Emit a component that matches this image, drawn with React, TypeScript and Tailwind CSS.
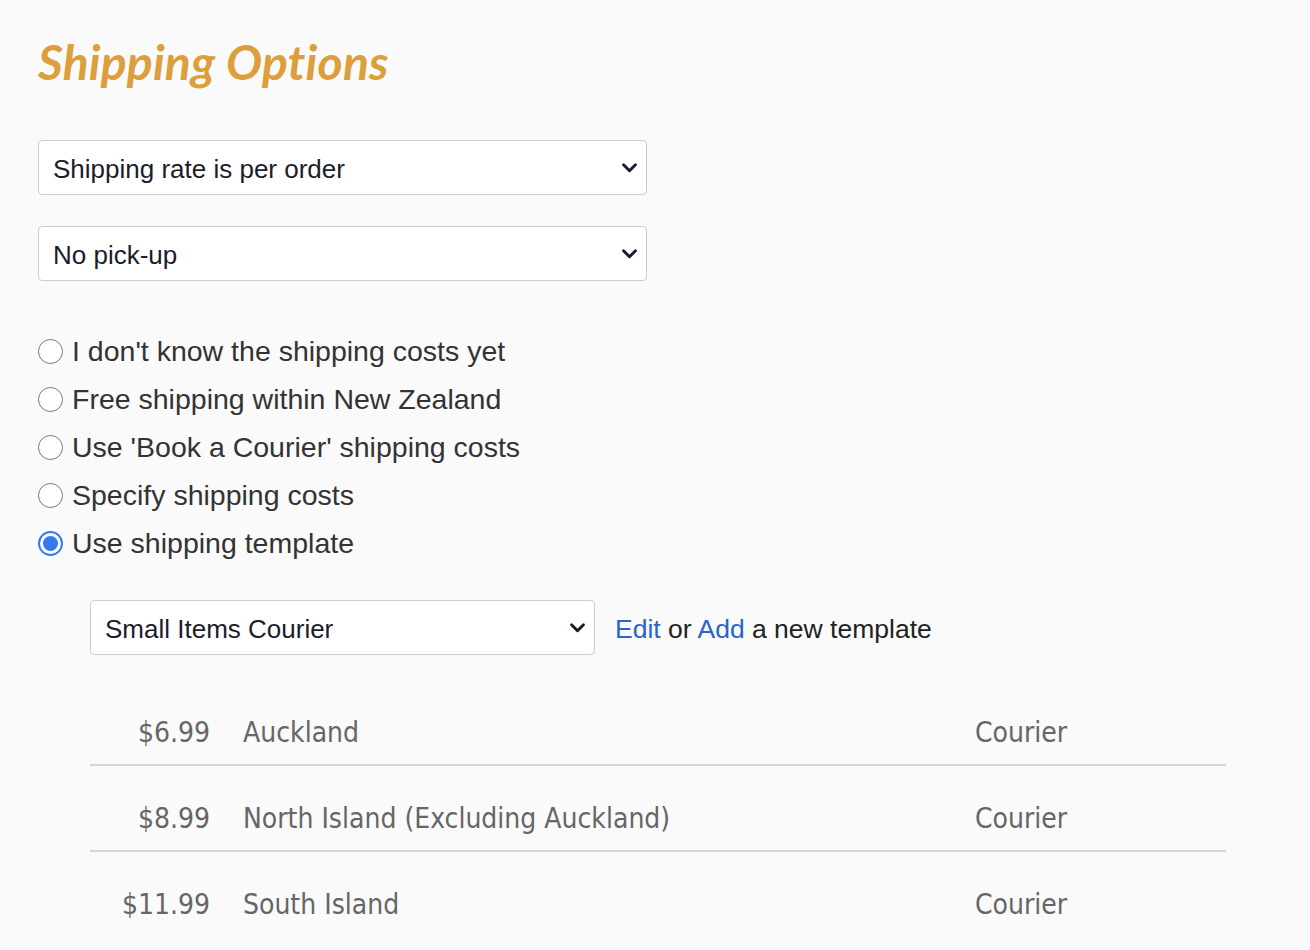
import { useState } from "react";

const sans = "font-['Liberation_Sans',Arial,sans-serif]";

function Chevron() {
  return (
    <svg
      viewBox="0 0 18 12"
      className="pointer-events-none absolute right-[9px] top-1/2 h-[11px] w-[17px] -translate-y-1/2"
    >
      <path d="M2.5 2.5 L9 9 L15.5 2.5" fill="none" stroke="#1b1b2f" strokeWidth="3.2" strokeLinecap="round" strokeLinejoin="round" />
    </svg>
  );
}

function Select({ value, options, className }: { value: string; options: string[]; className: string }) {
  return (
    <div className={`relative ${className}`}>
      <select
        defaultValue={value}
        className={`h-[55px] w-full appearance-none rounded-[4px] border border-[#cccccc] bg-white pl-[14px] pr-10 pt-[3px] text-[26px] text-[#1c1c2b] outline-none ${sans}`}
      >
        {options.map((o) => (
          <option key={o}>{o}</option>
        ))}
      </select>
      <Chevron />
    </div>
  );
}

const radios = [
  "I don't know the shipping costs yet",
  "Free shipping within New Zealand",
  "Use 'Book a Courier' shipping costs",
  "Specify shipping costs",
  "Use shipping template",
];

const rates = [
  { price: "$6.99", area: "Auckland", method: "Courier" },
  { price: "$8.99", area: "North Island (Excluding Auckland)", method: "Courier" },
  { price: "$11.99", area: "South Island", method: "Courier" },
];

export default function App() {
  const [picked, setPicked] = useState(4);

  return (
    <div className="min-h-[950px] bg-[#fafafa] pl-[38px] pt-[32px]">
      <h1 className="font-['Lato',sans-serif] text-[48px] font-bold italic leading-[60px] tracking-[0.2px] text-[#dc9f3b]">
        Shipping Options
      </h1>

      <div className="mt-[48px] flex w-[609px] flex-col gap-[31px]">
        <Select value="Shipping rate is per order" options={["Shipping rate is per order", "Shipping rate is per item"]} className="w-full" />
        <Select value="No pick-up" options={["No pick-up", "Pick-up allowed", "Must pick-up"]} className="w-full" />
      </div>

      <div className={`mt-[46px] flex flex-col ${sans}`}>
        {radios.map((label, i) => (
          <label key={label} className="flex h-[48px] cursor-pointer items-center gap-[9px]" onClick={() => setPicked(i)}>
            {picked === i ? (
              <span className="flex h-[25px] w-[25px] items-center justify-center rounded-full border-[2px] border-[#3478f6] bg-white">
                <span className="h-[15px] w-[15px] rounded-full bg-[#3478f6]" />
              </span>
            ) : (
              <span className="h-[25px] w-[25px] rounded-full border-[1.5px] border-[#7a7a7a] bg-white" />
            )}
            <span className="text-[28.5px] leading-none text-[#333333]">{label}</span>
          </label>
        ))}
      </div>

      <div className="ml-[52px] mt-[33px] flex items-center gap-[20px]">
        <Select value="Small Items Courier" options={["Small Items Courier", "Large Items Courier"]} className="w-[505px]" />
        <p className={`pt-[4px] text-[26.5px] text-[#222222] ${sans}`}>
          <a href="#" className="text-[#2a63c9]">Edit</a> or <a href="#" className="text-[#2a63c9]">Add</a> a new template
        </p>
      </div>

      <div className="ml-[52px] mt-[25px] w-[1136px] font-['DejaVu_Sans_Condensed','DejaVu_Sans',sans-serif] text-[28px] text-[#666666]">
        {rates.map((r, i) => (
          <div
            key={r.area}
            className={`flex h-[86px] items-start pt-[38px] leading-[30px] ${i < rates.length - 1 ? "border-b-2 border-[#d4d4d4]" : ""}`}
          >
            <span className="w-[120px] text-right">{r.price}</span>
            <span className="ml-[33px] w-[732px]">{r.area}</span>
            <span>{r.method}</span>
          </div>
        ))}
      </div>
    </div>
  );
}
